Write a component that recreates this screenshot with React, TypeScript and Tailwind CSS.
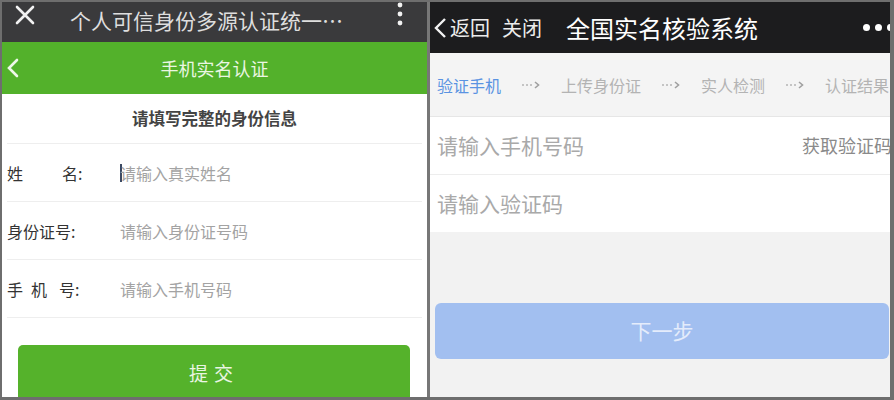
import React from "react";

const font = { fontFamily: '"Noto Sans CJK SC", "Noto Sans", sans-serif' };

function StepArrow() {
  return (
    <svg width="20" height="10" viewBox="0 0 20 10" className="shrink-0">
      <circle cx="2" cy="5" r="1" fill="#b5b5b5" />
      <circle cx="6" cy="5" r="1" fill="#b5b5b5" />
      <circle cx="10" cy="5" r="1" fill="#b5b5b5" />
      <path d="M14 2 L17.5 5 L14 8" stroke="#a0a0a0" strokeWidth="1.6" fill="none" />
    </svg>
  );
}

function FormRow({ label, placeholder, cursor }: { label: React.ReactNode; placeholder: string; cursor?: boolean }) {
  return (
    <div className="h-[58px] flex items-center border-b border-[#eeeeee] mx-[5px] shrink-0">
      <div className="w-[80px] flex text-[16px] text-[#333333]">{label}</div>
      <div className="ml-[33px] flex items-center text-[16px] text-[#a3a3a3]">
        {cursor && <span className="w-[2px] h-[18px] bg-[#3c4a63] mr-[-2px]" />}
        <span>{placeholder}</span>
      </div>
    </div>
  );
}

function LeftPhone() {
  return (
    <div className="w-[425px] h-full flex flex-col bg-white overflow-hidden">
      <div className="h-[40px] bg-[#3a3a3c] flex items-start shrink-0">
        <svg width="22" height="20" viewBox="0 0 22 20" className="ml-[12px] mt-[3px]">
          <path d="M3 2 L19 18 M19 2 L3 18" stroke="#f2f2f2" strokeWidth="2.6" strokeLinecap="round" />
        </svg>
        <span className="ml-[34px] mt-[3px] text-[21px] leading-[30px] text-[#dedede]">个人可信身份多源认证统一…</span>
        <svg width="8" height="26" viewBox="0 0 8 26" className="ml-auto mr-[23px]">
          <circle cx="4" cy="3" r="2.4" fill="#f2f2f2" />
          <circle cx="4" cy="12" r="2.4" fill="#f2f2f2" />
          <circle cx="4" cy="21" r="2.4" fill="#f2f2f2" />
        </svg>
      </div>
      <div className="h-[52px] bg-[#53b12b] flex items-center relative shrink-0">
        <svg width="14" height="20" viewBox="0 0 14 20" className="ml-[4px]">
          <path d="M11 2 L3 10 L11 18" stroke="#eef7e8" strokeWidth="2.6" fill="none" strokeLinecap="round" />
        </svg>
        <span className="absolute inset-0 flex items-center justify-center text-[18px] text-[#eaf6e2]">手机实名认证</span>
      </div>
      <div className="h-[50px] flex items-center justify-center border-b border-[#eeeeee] mx-[5px] shrink-0">
        <span className="text-[16.5px] font-bold text-[#444444]">请填写完整的身份信息</span>
      </div>
      <FormRow
        label={
          <>
            <span>姓</span>
            <span className="ml-[39px]">名:</span>
          </>
        }
        placeholder="请输入真实姓名"
        cursor
      />
      <FormRow label={<span>身份证号:</span>} placeholder="请输入身份证号码" />
      <FormRow
        label={
          <>
            <span>手</span>
            <span className="ml-[8px]">机</span>
            <span className="ml-[12px]">号:</span>
          </>
        }
        placeholder="请输入手机号码"
      />
      <div className="mt-[27px] ml-[16px] mr-[17px] h-[56px] shrink-0 rounded-[5px] bg-[#55b22b] flex items-center justify-center text-[19px] tracking-[6px] text-[#e9f5e2]">
        提交
      </div>
    </div>
  );
}

function RightPhone() {
  const steps = ["上传身份证", "实人检测", "认证结果"];
  return (
    <div className="flex-1 h-full flex flex-col bg-[#f2f2f2] overflow-hidden">
      <div className="h-[51px] bg-[#1c1c1e] flex items-center shrink-0 text-white">
        <svg width="16" height="22" viewBox="0 0 16 22" className="ml-[2px]">
          <path d="M13 2 L4 11 L13 20" stroke="#f2f2f2" strokeWidth="2.4" fill="none" />
        </svg>
        <span className="ml-[2px] text-[20px] text-[#ececec]">返回</span>
        <span className="ml-[12px] text-[20px] text-[#ececec]">关闭</span>
        <span className="ml-[24px] text-[24px] text-white">全国实名核验系统</span>
        <div className="ml-auto mr-[-4px] flex gap-[5px]">
          <span className="w-[7px] h-[7px] rounded-full bg-white" />
          <span className="w-[7px] h-[7px] rounded-full bg-white" />
          <span className="w-[7px] h-[7px] rounded-full bg-white" />
        </div>
      </div>
      <div className="h-[64px] bg-[#f4f4f4] border-b border-[#e6e6e6] flex items-center pl-[7px] gap-[20px] shrink-0 whitespace-nowrap text-[16px]">
        <span className="text-[#5a93e2]">验证手机</span>
        {steps.map((s) => (
          <React.Fragment key={s}>
            <StepArrow />
            <span className="text-[#b3b3b3]">{s}</span>
          </React.Fragment>
        ))}
      </div>
      <div className="bg-white shrink-0">
        <div className="h-[58px] flex items-center pl-[7px] border-b border-[#ededed]">
          <span className="text-[21px] text-[#a9a9a9]">请输入手机号码</span>
          <span className="ml-auto mr-[-2px] text-[18px] text-[#8a8a8a] whitespace-nowrap">获取验证码</span>
        </div>
        <div className="h-[57px] flex items-center pl-[7px]">
          <span className="text-[21px] text-[#a9a9a9]">请输入验证码</span>
        </div>
      </div>
      <div className="mt-[71px] ml-[5px] mr-[1px] h-[56px] shrink-0 rounded-[6px] bg-[#a2bff0] flex items-center justify-center text-[21px] text-[#e4ecfb]">
        下一步
      </div>
    </div>
  );
}

export default function App() {
  return (
    <div
      className="w-[894px] h-[400px] flex bg-white border-t-2 border-l-2 border-r-4 border-b-[3px] border-[#6e6e6e] overflow-hidden"
      style={font}
    >
      <LeftPhone />
      <div className="w-[3px] h-full bg-[#777777] shrink-0" />
      <RightPhone />
    </div>
  );
}
